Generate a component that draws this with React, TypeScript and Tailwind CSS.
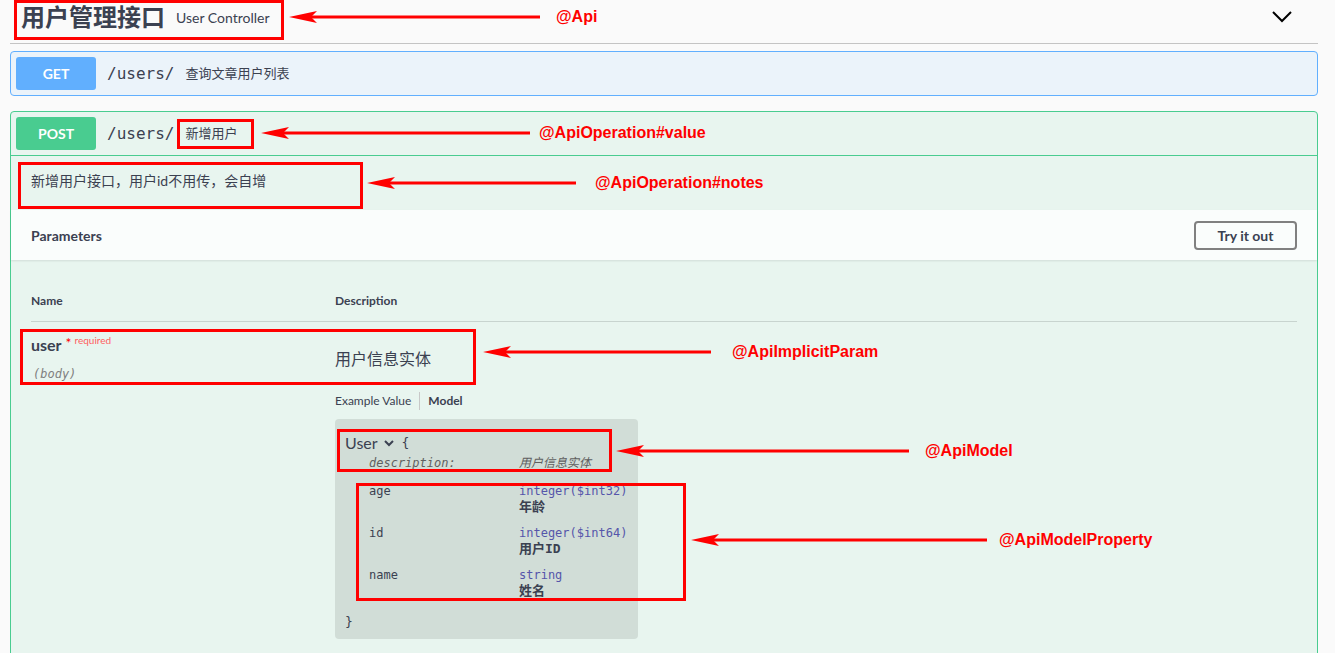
import React from 'react';

const ui = "font-['Lato','Noto_Sans_CJK_SC',sans-serif]";
const mono = "font-['DejaVu_Sans_Mono','Noto_Sans_CJK_SC',monospace]";

const annotations = [
  { tip: 289, end: 540, y: 17, label: '@Api', lx: 556 },
  { tip: 261, end: 530, y: 133, label: '@ApiOperation#value', lx: 539 },
  { tip: 367, end: 576, y: 183, label: '@ApiOperation#notes', lx: 595 },
  { tip: 483, end: 711, y: 352, label: '@ApiImplicitParam', lx: 732 },
  { tip: 616, end: 909, y: 451, label: '@ApiModel', lx: 925 },
  { tip: 691, end: 987, y: 540, label: '@ApiModelProperty', lx: 999 },
];

const boxes = [
  { left: 14, top: 0, width: 270, height: 40 },
  { left: 177, top: 119, width: 77, height: 30 },
  { left: 18, top: 162, width: 345, height: 47 },
  { left: 20, top: 329, width: 456, height: 56 },
  { left: 337, top: 429, width: 275, height: 43 },
  { left: 356, top: 483, width: 330, height: 118 },
];

const props = [
  { name: 'age', type: 'integer($int32)', desc: '年龄' },
  { name: 'id', type: 'integer($int64)', desc: '用户ID' },
  { name: 'name', type: 'string', desc: '姓名' },
];

function Overlay() {
  return (
    <div className="pointer-events-none absolute inset-0">
      {boxes.map((b, i) => (
        <div
          key={i}
          className="absolute border-[3px] border-[#ff0000]"
          style={{ left: b.left, top: b.top, width: b.width, height: b.height }}
        />
      ))}
      <svg className="absolute inset-0" width="1335" height="653">
        {annotations.map((a, i) => (
          <g key={i} fill="#ff0000" stroke="none">
            <rect x={a.tip + 20} y={a.y - 1.5} width={a.end - a.tip - 20} height={3} />
            <polygon points={`${a.tip},${a.y} ${a.tip + 28},${a.y - 6} ${a.tip + 22},${a.y} ${a.tip + 28},${a.y + 6}`} />
          </g>
        ))}
      </svg>
      {annotations.map((a, i) => (
        <div
          key={i}
          className="absolute -translate-y-1/2 font-['Liberation_Sans',Arial,sans-serif] text-[16px] leading-5 font-bold text-[#ff0000]"
          style={{ left: a.lx, top: a.y }}
        >
          {a.label}
        </div>
      ))}
    </div>
  );
}

function Badge({ method, color }: { method: string; color: string }) {
  return (
    <div className={`flex h-[33px] w-[80px] items-center justify-center rounded-[3px] ${color} ${ui} text-[14px] font-bold text-white`}>
      {method}
    </div>
  );
}

export default function App() {
  return (
    <div className={`relative h-[653px] w-full overflow-hidden bg-[#fafafa] text-[#3b4151] ${ui}`}>
      {/* tag header */}
      <div className="mx-[10px] flex h-[44px] w-[1308px] items-center border-b border-[#c4c4c4] pb-[9px] pl-[11px] pr-[26px]">
        <span className="text-[24px] font-bold leading-none">用户管理接口</span>
        <span className="ml-[11px] text-[14px] text-[#3b4151]">User Controller</span>
        <svg className="ml-auto" width="20" height="12" viewBox="0 0 20 12" fill="none">
          <path d="M1 1l9 9 9-9" stroke="#000" strokeWidth="2" />
        </svg>
      </div>

      {/* GET */}
      <div className="mx-[10px] mt-[7px] flex h-[45px] w-[1308px] items-center rounded-[4px] border border-[#61affe] bg-[#ebf3fa] px-[5px]">
        <Badge method="GET" color="bg-[#61affe]" />
        <span className={`ml-[11px] text-[16px] ${mono}`}>/users/</span>
        <span className="ml-[11px] text-[13px]">查询文章用户列表</span>
      </div>

      {/* POST */}
      <div className="mx-[10px] mt-[15px] w-[1308px] rounded-[4px] border border-[#49cc90] bg-[#e8f5ef] pb-[40px]">
        <div className="flex h-[44px] items-center border-b border-[#49cc90] px-[5px]">
          <Badge method="POST" color="bg-[#49cc90]" />
          <span className={`ml-[11px] text-[16px] ${mono}`}>/users/</span>
          <span className="ml-[11px] text-[13px]">新增用户</span>
        </div>
        <div className="flex h-[54px] items-center px-[20px] pb-[5px] text-[14px]">新增用户接口，用户id不用传，会自增</div>

        <div className="flex h-[50px] items-center justify-between bg-white/80 px-[20px] shadow-[0_1px_2px_rgba(0,0,0,0.1)]">
          <span className="text-[14px] font-bold">Parameters</span>
          <button className="h-[29px] w-[103px] rounded-[4px] border-2 border-[#808080] text-[14px] font-bold">Try it out</button>
        </div>

        <div className="px-[20px]">
          <div className="flex border-b border-[#c8d4cf] pt-[33px] pb-[12px] text-[12px] font-bold leading-4">
            <div className="w-[304px]">Name</div>
            <div>Description</div>
          </div>
          <div className="flex pt-[13px]">
            <div className="w-[304px]">
              <div className="flex items-start">
                <span className="text-[16px] font-bold leading-5">user</span>
                <span className="ml-[4px] text-[14px] leading-4 text-[#ff0000]">*</span>
                <span className="ml-[3px] mt-[-2px] text-[10px] text-[#ff6060]">required</span>
              </div>
              <div className={`mt-[10px] ml-[2px] text-[12px] italic text-[#808080] ${mono}`}>(body)</div>
            </div>
            <div>
              <div className="mt-[14px] text-[16px] leading-5">用户信息实体</div>
              <div className="mt-[23px] flex items-center text-[12px] leading-4">
                <span className="text-[#3b4151]">Example Value</span>
                <span className="mx-[8px] h-[18px] w-px bg-[#c8c8c8]" />
                <span className="font-bold">Model</span>
              </div>
              <div className="mt-[9px] h-[220px] w-[303px] rounded-[4px] bg-[#d1ddd7] px-[10px] pt-[14px]">
                <div className="flex items-center text-[16px] leading-5">
                  <span>User</span>
                  <svg className="ml-[6px]" width="10" height="8" viewBox="0 0 10 8">
                    <path d="M1 2l4 4 4-4" stroke="#3b4151" strokeWidth="2" fill="none" />
                  </svg>
                  <span className={`ml-[8px] text-[13px] ${mono}`}>{'{'}</span>
                </div>
                <div className={`mt-[2px] ml-[24px] flex text-[12px] italic leading-4 text-[#606060] ${mono}`}>
                  <span className="w-[150px]">description:</span>
                  <span>用户信息实体</span>
                </div>
                <div className="mt-[12px] ml-[24px] flex flex-col gap-[10px]">
                  {props.map((p) => (
                    <div key={p.name} className="flex">
                      <span className={`w-[150px] text-[12px] leading-4 ${mono}`}>{p.name}</span>
                      <div>
                        <div className={`text-[12px] leading-4 text-[#55a] ${mono}`}>{p.type}</div>
                        <div className={`text-[13px] font-bold leading-4 ${mono}`}>{p.desc}</div>
                      </div>
                    </div>
                  ))}
                </div>
                <div className={`mt-[13px] text-[13px] ${mono}`}>{'}'}</div>
              </div>
            </div>
          </div>
        </div>
      </div>

      <Overlay />
    </div>
  );
}
